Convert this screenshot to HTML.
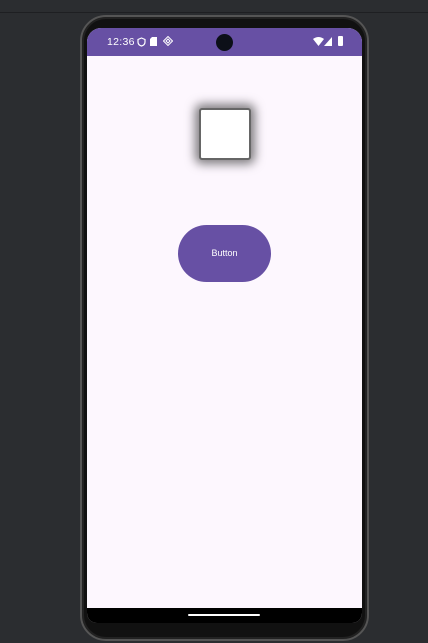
<!DOCTYPE html>
<html><head><style>
*{margin:0;padding:0;box-sizing:border-box}
body{width:428px;height:643px;background:#2b2d30;position:relative;overflow:hidden;font-family:"Liberation Sans",sans-serif}
.topline{position:absolute;left:0;top:0;width:428px;height:13px;background:#2b2d30;border-bottom:1px solid #1e1f22}
.phone{position:absolute;left:80px;top:15px;width:289px;height:626px;background:#111;border-radius:26px;border:2px solid #555;box-shadow:inset 0 0 0 2px #222}
.screen{position:absolute;left:87px;top:28px;width:275px;height:595px;background:#fdf7fe;border-radius:14px 14px 10px 10px;overflow:hidden}
.status{position:absolute;left:0;top:0;width:275px;height:28px;background:#6750a4;color:#fff;font-size:10.5px}
.cam{position:absolute;left:129px;top:6px;width:17px;height:17px;border-radius:50%;background:#0c0f18}
.nav{position:absolute;left:0;top:580px;width:275px;height:15px;background:#000}
.bar{position:absolute;left:101px;top:6px;width:72px;height:2px;background:#fff;border-radius:1px}
.sq{position:absolute;left:112px;top:80px;width:52px;height:52px;background:#fff;border:2px solid #666;border-radius:3px;box-shadow:0 0 10px 4px rgba(0,0,0,.5)}
.btn{position:absolute;left:91px;top:197px;width:93px;height:57px;background:#6750a4;border-radius:29px;color:#fff;font-size:9px;text-align:center;line-height:57px}
</style></head><body>
<div class="topline"></div>
<div class="phone"></div>
<div class="screen">
 <div class="status">
  <span style="position:absolute;left:20px;top:8px;letter-spacing:0.3px">12:36</span>
  <svg style="position:absolute;left:50px;top:9px" width="9" height="10" viewBox="0 0 9 10"><path d="M4.5 1L8 2.5V5c0 2-1.5 3.5-3.5 4C2.5 8.5 1 7 1 5V2.5z" fill="none" stroke="#fff" stroke-width="1.2"/></svg>
  <svg style="position:absolute;left:63px;top:9px" width="7" height="9"><path d="M2 0H7V9H0V2z" fill="#fff"/></svg>
  <svg style="position:absolute;left:76px;top:8px" width="10" height="10" viewBox="0 0 10 10"><path d="M5 .5L9.5 5 5 9.5 .5 5z M5 3L7 5 5 7 3 5z" fill="none" stroke="#fff" stroke-width="1"/></svg>
  <div class="cam"></div>
  <svg style="position:absolute;left:226px;top:9px" width="11" height="9"><path d="M0 2Q5.5-2 11 2L5.5 9z" fill="#fff"/></svg>
  <svg style="position:absolute;left:237px;top:9px" width="8" height="9"><path d="M8 0V9H0z" fill="#fff"/></svg>
  <div style="position:absolute;left:251px;top:8px;width:5px;height:10px;background:#fff;border-radius:1px"></div>
 </div>
 <div class="sq"></div>
 <div class="btn">Button</div>
 <div class="nav"><div class="bar"></div></div>
</div>
</body></html>
